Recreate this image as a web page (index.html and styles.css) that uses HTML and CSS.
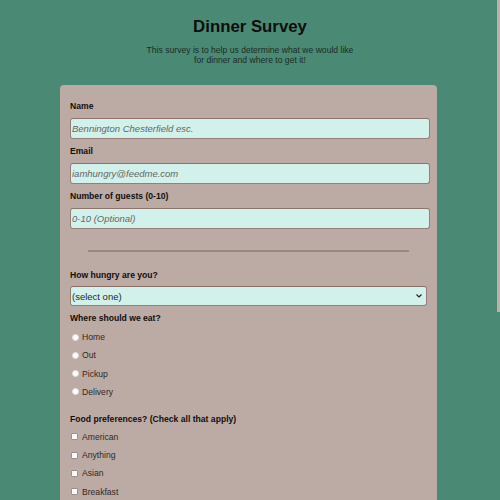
FILE: index.html
```html
<!DOCTYPE html>
<html>
<head>
<meta charset="utf-8">
<link rel="stylesheet" href="styles.css">
</head>
<body>
<header class="head">
  <h1 class="title">Dinner Survey</h1>
  <p class="desc">This survey is to help us determine what we would like<br>for dinner and where to get it!</p>
</header>
<form class="card">
  <label class="lbl" for="name">Name</label>
  <input class="field" id="name" type="text" placeholder="Bennington Chesterfield esc.">
  <label class="lbl" for="email">Email</label>
  <input class="field" id="email" type="email" placeholder="iamhungry@feedme.com">
  <label class="lbl" for="num">Number of guests (0-10)</label>
  <input class="field" id="num" type="number" placeholder="0-10 (Optional)">
  <hr class="rule">
  <label class="lbl" for="hungry">How hungry are you?</label>
  <select class="pick" id="hungry"><option>(select one)</option></select>
  <p class="lbl">Where should we eat?</p>
  <ul class="opts opts-radio">
    <li class="opt"><input class="radio" type="radio" name="where"><span>Home</span></li>
    <li class="opt"><input class="radio" type="radio" name="where"><span>Out</span></li>
    <li class="opt"><input class="radio" type="radio" name="where"><span>Pickup</span></li>
    <li class="opt"><input class="radio" type="radio" name="where"><span>Delivery</span></li>
  </ul>
  <p class="lbl lbl-food">Food preferences? (Check all that apply)</p>
  <ul class="opts opts-check">
    <li class="opt"><input class="check" type="checkbox"><span>American</span></li>
    <li class="opt"><input class="check" type="checkbox"><span>Anything</span></li>
    <li class="opt"><input class="check" type="checkbox"><span>Asian</span></li>
    <li class="opt"><input class="check" type="checkbox"><span>Breakfast</span></li>
  </ul>
</form>
<div class="thumb"></div>
</body>
</html>
```
FILE: styles.css
```css
html, body {
  margin: 0;
  padding: 0;
  background: #4a8a74;
  font-family: "Liberation Sans", Arial, sans-serif;
  color: #1a1a1a;
  overflow: hidden;
  height: 500px;
}
.head {
  text-align: center;
  padding-top: 17px;
}
.title {
  margin: 0;
  font-size: 16.8px;
  font-weight: bold;
  color: #0d0d0d;
  line-height: 20px;
}
.desc {
  margin: 8px 0 0;
  font-size: 8.6px;
  line-height: 10px;
  color: #1c2a25;
}
.card {
  width: 357px;
  margin: 20px 0 0 60px;
  padding: 16px 10px 10px;
  background: #bcaba4;
  border-radius: 4px;
  display: flex;
  flex-direction: column;
  align-items: flex-start;
}
.lbl {
  display: block;
  margin: 0;
  font-size: 8.6px;
  font-weight: bold;
  line-height: 10px;
  color: #120e0b;
}
.field {
  box-sizing: border-box;
  width: 360px;
  height: 21px;
  margin: 7px 0;
  padding: 0 1px;
  background: #d3f1eb;
  border: 1px solid #958077;
  border-top-color: #8c746b;
  border-radius: 3px;
  font-family: "Liberation Sans", Arial, sans-serif;
  font-size: 9.5px;
  font-style: italic;
  outline: none;
  -moz-appearance: textfield;
}
.field::-webkit-inner-spin-button,
.field::-webkit-outer-spin-button {
  -webkit-appearance: none;
  margin: 0;
}
.field::placeholder {
  color: #5e6866;
  font-style: italic;
}
.rule {
  align-self: center;
  width: 321px;
  height: 0;
  margin: 14px 0 18px;
  border: none;
  border-top: 2px solid #9c8780;
}
.pick {
  -webkit-appearance: none;
  appearance: none;
  box-sizing: border-box;
  width: 357px;
  height: 20px;
  margin: 6px 0 7px;
  padding: 0 0 0 1px;
  background: #d3f1eb url("data:image/svg+xml,%3Csvg xmlns='http://www.w3.org/2000/svg' width='6' height='4' viewBox='0 0 6 4'%3E%3Cpath d='M0.5 0.5 L3 3 L5.5 0.5' fill='none' stroke='%23222' stroke-width='1.2'/%3E%3C/svg%3E") no-repeat right 4px center;
  border: 1px solid #958077;
  border-top-color: #8c6f64;
  border-radius: 3px;
  font-family: "Liberation Sans", Arial, sans-serif;
  font-size: 9.5px;
  color: #1f2a28;
}
.opts {
  list-style: none;
  margin: 9px 0 0;
  padding: 0;
  display: flex;
  flex-direction: column;
  gap: 8.3px;
}
.opts-check {
  margin-top: 8px;
}
.opt {
  display: flex;
  align-items: center;
  height: 10px;
  font-size: 8.6px;
  color: #2e2925;
}
.radio {
  -webkit-appearance: none;
  appearance: none;
  box-sizing: border-box;
  width: 7px;
  height: 7px;
  margin: 0 3px 0 2px;
  border-radius: 50%;
  background: #fdfdfd;
  border: 1px solid #e4e0de;
}
.check {
  -webkit-appearance: none;
  appearance: none;
  box-sizing: border-box;
  width: 7px;
  height: 7px;
  margin: 0 4px 0 1px;
  border-radius: 1px;
  background: #fdfdfd;
  border: 1px solid #9a9090;
}
.lbl-food {
  margin-top: 17px;
}
.thumb {
  position: fixed;
  right: 0;
  top: 0;
  width: 3px;
  height: 312px;
  background: #c0aeaa;
}
```
